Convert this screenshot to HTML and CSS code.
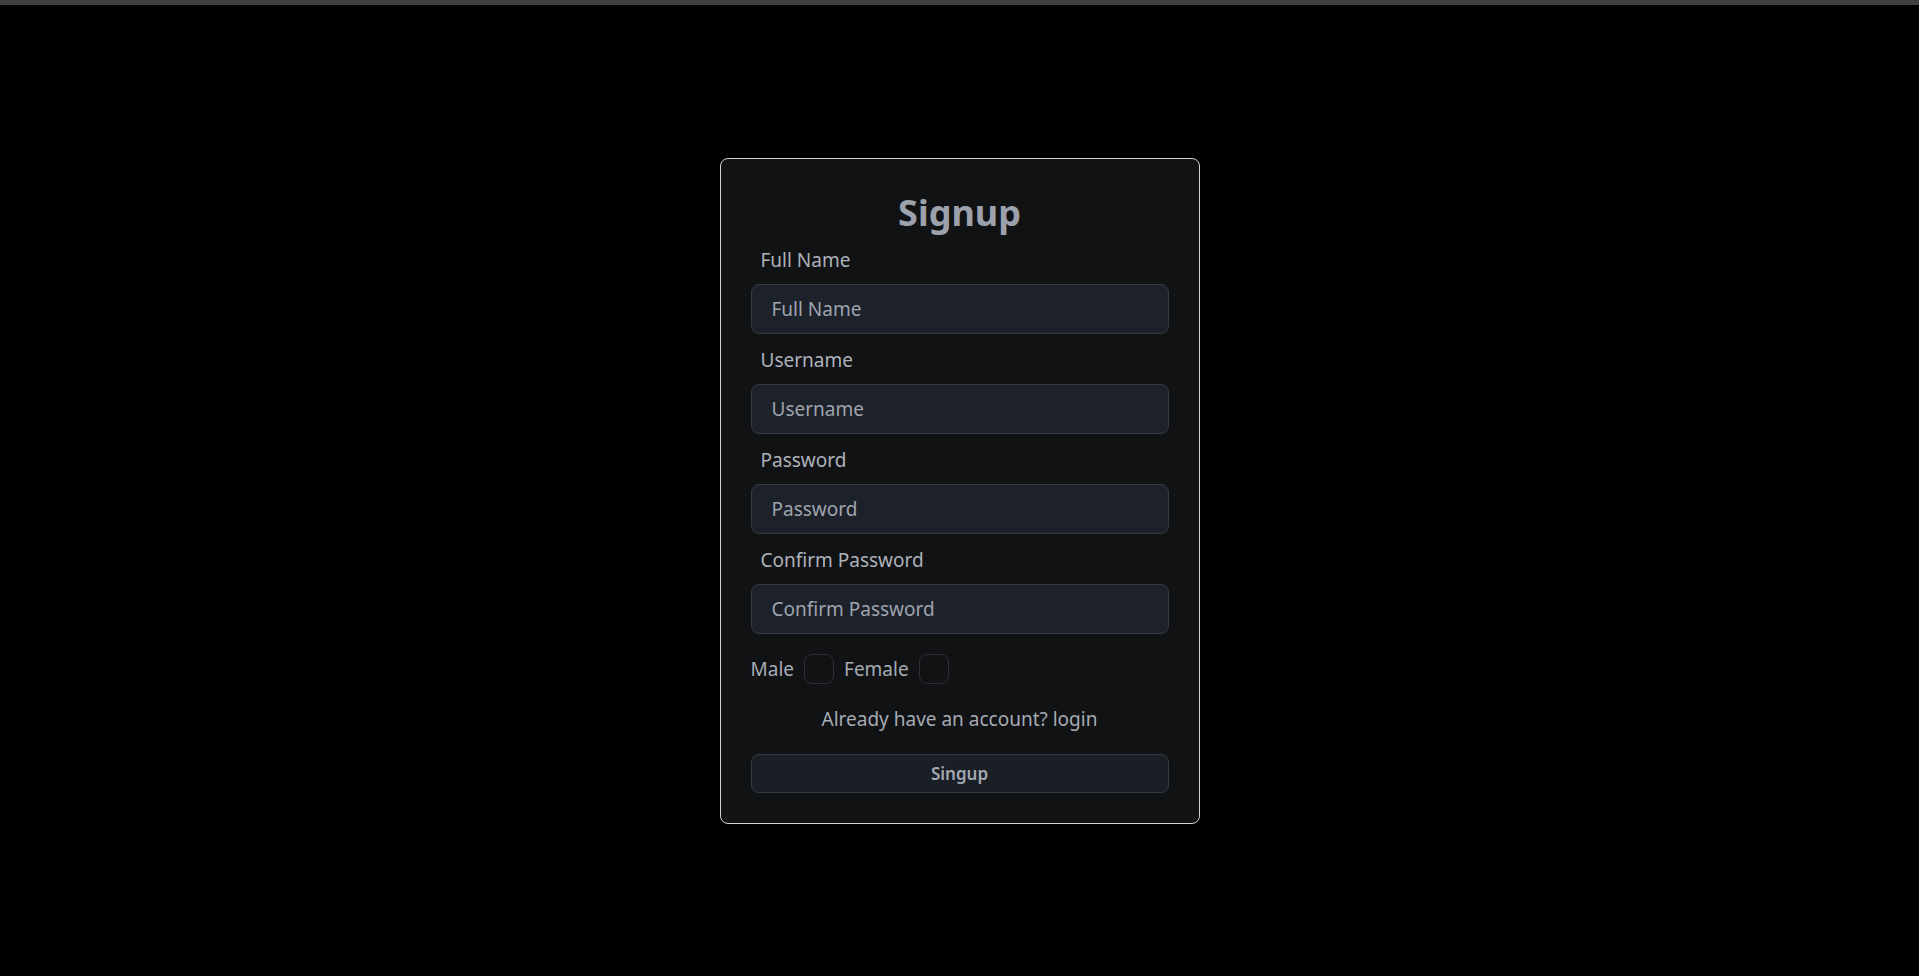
FILE: index.html
```html
<!DOCTYPE html>
<html lang="en">
<head>
<meta charset="utf-8">
<title>Signup</title>
<link rel="stylesheet" href="styles.css">
</head>
<body>
<div class="topbar"></div>
<main class="page">
  <form class="card">
    <h1 class="title">Signup</h1>
    <div class="field">
      <label class="label">Full Name</label>
      <input class="input" type="text" placeholder="Full Name">
    </div>
    <div class="field">
      <label class="label">Username</label>
      <input class="input" type="text" placeholder="Username">
    </div>
    <div class="field">
      <label class="label">Password</label>
      <input class="input" type="password" placeholder="Password">
    </div>
    <div class="field">
      <label class="label">Confirm Password</label>
      <input class="input" type="password" placeholder="Confirm Password">
    </div>
    <div class="gender">
      <span class="gender-text">Male</span>
      <input class="check" type="checkbox">
      <span class="gender-text">Female</span>
      <input class="check" type="checkbox">
    </div>
    <p class="switch">Already have an account? login</p>
    <button class="btn" type="button">Singup</button>
  </form>
</main>
</body>
</html>
```
FILE: styles.css
```css
* { box-sizing: border-box; }
html, body { margin: 0; padding: 0; }
body {
  background: #000;
  font-family: "Noto Sans", "Open Sans", sans-serif;
  color: #a9aeb7;
  height: 976px;
  overflow: hidden;
}
.topbar {
  height: 5px;
  background: #404040;
}
.page {
  display: flex;
  justify-content: center;
  padding-top: 153px;
}
.card {
  width: 480px;
  background: #111214;
  border: 1px solid #cfd0d2;
  border-radius: 8px;
  padding: 30px;
  display: flex;
  flex-direction: column;
}
.title {
  margin: 2px 0 0;
  text-align: center;
  font-size: 36px;
  line-height: 44px;
  font-weight: 700;
  color: #9ca1ac;
}
.field {
  display: flex;
  flex-direction: column;
  margin-top: 11px;
}
.field + .field { margin-top: 12px; }
.label {
  font-size: 19px;
  line-height: 28px;
  padding-left: 10px;
  margin-bottom: 10px;
  color: #aeb2ba;
}
.input {
  height: 50px;
  width: 100%;
  background: #1d2129;
  border: 1px solid #353a42;
  border-radius: 8px;
  padding: 0 20px;
  font-family: inherit;
  font-size: 19px;
  color: #a3a8b1;
  outline: none;
}
.input::placeholder { color: #9fa4ae; opacity: 1; }
.gender {
  display: flex;
  align-items: center;
  gap: 10px;
  margin-top: 20px;
  height: 30px;
}
.gender-text {
  font-size: 19px;
  line-height: 30px;
  color: #a6abb4;
}
.check {
  appearance: none;
  -webkit-appearance: none;
  margin: 0;
  width: 30px;
  height: 30px;
  border: 1px solid #2c2f35;
  border-radius: 8px;
  background: #111214;
}
.switch {
  margin: 20px 0 0;
  text-align: center;
  font-size: 19px;
  line-height: 30px;
  color: #a6abb4;
}
.btn {
  margin-top: 20px;
  height: 39px;
  width: 100%;
  background: #1a1e25;
  border: 1px solid #323c49;
  border-radius: 8px;
  font-family: inherit;
  font-size: 17px;
  font-weight: 600;
  color: #a3a8b1;
  padding: 0;
}
```
